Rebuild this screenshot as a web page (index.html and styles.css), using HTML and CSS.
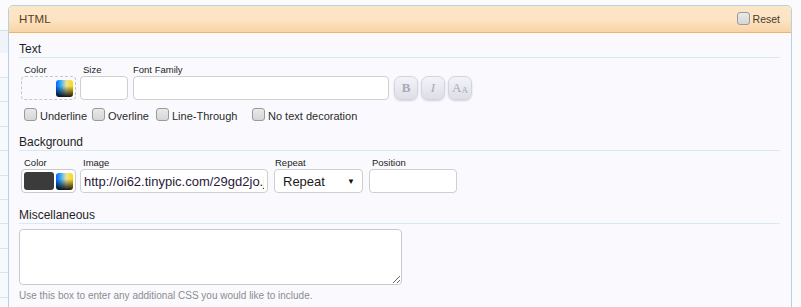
FILE: index.html
```html
<!DOCTYPE html>
<html>
<head>
<meta charset="utf-8">
<link rel="stylesheet" href="styles.css">
</head>
<body>
<div class="page">
  <div class="strip"></div>
  <div class="panel">
    <div class="panel-head">
      <span class="panel-title">HTML</span>
      <label class="reset"><input type="checkbox" class="cb"><span>Reset</span></label>
    </div>
    <div class="panel-body">
      <div class="section">
        <div class="sec-title">Text</div>
        <div class="fields">
          <div class="field">
            <span class="lbl">Color</span>
            <div class="colorbox dashed"><span class="picker"></span></div>
          </div>
          <div class="field">
            <span class="lbl">Size</span>
            <input class="inp w-size" type="text">
          </div>
          <div class="field">
            <span class="lbl lbl-tight">Font Family</span>
            <input class="inp w-font" type="text">
          </div>
          <div class="field btns">
            <span class="lbl">&nbsp;</span>
            <div class="btn-row">
              <span class="fbtn b">B</span>
              <span class="fbtn i">I</span>
              <span class="fbtn aa">A<small>A</small></span>
            </div>
          </div>
        </div>
        <div class="checks">
          <label class="chk c1"><input type="checkbox" class="cb"><span>Underline</span></label>
          <label class="chk c2"><input type="checkbox" class="cb"><span>Overline</span></label>
          <label class="chk c3"><input type="checkbox" class="cb"><span>Line-Through</span></label>
          <label class="chk"><input type="checkbox" class="cb"><span>No text decoration</span></label>
        </div>
      </div>

      <div class="section">
        <div class="sec-title bg-title">Background</div>
        <div class="fields">
          <div class="field">
            <span class="lbl">Color</span>
            <div class="colorbox solid"><span class="swatch"></span><span class="picker"></span></div>
          </div>
          <div class="field">
            <span class="lbl">Image</span>
            <input class="inp w-img" type="text" value="http://oi62.tinypic.com/29gd2jo.jpg">
          </div>
          <div class="field gap6">
            <span class="lbl lbl-tight">Repeat</span>
            <div class="select"><span>Repeat</span><span class="arrow">&#9660;</span></div>
          </div>
          <div class="field gap6">
            <span class="lbl">Position</span>
            <input class="inp w-pos" type="text">
          </div>
        </div>
      </div>

      <div class="section">
        <div class="sec-title misc-title">Miscellaneous</div>
        <textarea class="misc"></textarea>
        <div class="hint">Use this box to enter any additional CSS you would like to include.</div>
      </div>
    </div>
  </div>
</div>
</body>
</html>
```
FILE: styles.css
```css
html, body {
  margin: 0;
  padding: 0;
  background: #fbfbfd;
  font-family: "Liberation Sans", Arial, sans-serif;
  color: #222;
}
.page {
  display: flex;
  align-items: flex-start;
  height: 307px;
  overflow: hidden;
}
.strip {
  width: 8px;
  flex: none;
  height: 307px;
  background:
    linear-gradient(#cfe2f1, #cfe2f1) 0 30px / 8px 1px no-repeat,
    linear-gradient(#eef4fa, #eef4fa) 0 31px / 8px 22px no-repeat,
    repeating-linear-gradient(to bottom, #d4e6f3 0, #d4e6f3 1px, #f7fafd 1px, #f7fafd 24.4px) 0 77px / 8px 240px no-repeat;
}
.panel {
  margin-top: 5px;
  width: 782px;
  height: 320px;
  border: 1px solid #b7d0e3;
  border-radius: 5px 5px 0 0;
  background: #fafafe;
  overflow: hidden;
}
.panel-head {
  height: 26px;
  border-bottom: 1px solid #f6b35f;
  background: linear-gradient(to bottom, #fde6c8 0%, #fce3c2 55%, #f8d4a6 100%);
  display: flex;
  align-items: center;
  justify-content: space-between;
  padding: 0 10px 0 10px;
}
.panel-title {
  font-size: 11.5px;
  color: #5b3d16;
  letter-spacing: 0.1px;
}
.reset {
  display: flex;
  align-items: center;
  gap: 3px;
  font-size: 10.5px;
  color: #4a3a28;
  margin-top: -1px;
  margin-right: 1px;
}
.cb {
  -webkit-appearance: none;
  appearance: none;
  width: 13px;
  height: 13px;
  margin: 0;
  border: 1px solid #9a9a9a;
  border-radius: 3px;
  background: linear-gradient(to bottom, #e9e9e9, #d6d6d6);
  box-sizing: border-box;
  flex: none;
}
.panel-body {
  padding: 0 11px 0 10px;
}
.sec-title {
  font-size: 12px;
  line-height: 16px;
  padding-top: 8px;
  border-bottom: 1px solid #d6e9f5;
  color: #1e1e1e;
}
.bg-title {
  padding-top: 13px;
}
.misc-title {
  padding-top: 14px;
}
.fields {
  display: flex;
  align-items: flex-start;
  gap: 4px;
  margin-top: 5px;
  padding-left: 2px;
}
.field {
  display: flex;
  flex-direction: column;
}
.field.gap6 {
  margin-left: 2px;
}
.field.btns {
  margin-left: 1px;
}
.lbl {
  font-size: 9.5px;
  line-height: 13px;
  padding-left: 3px;
  color: #222;
}
.lbl-tight {
  padding-left: 1px;
}
.colorbox {
  width: 55px;
  height: 24px;
  box-sizing: border-box;
  border-radius: 4px;
  display: flex;
  align-items: center;
  justify-content: flex-end;
  padding-right: 2px;
  gap: 2px;
}
.colorbox.dashed {
  border: 1px dashed #c6c6c6;
}
.colorbox.solid {
  border: 1px solid #c9c9c9;
  background: #fff;
  padding-left: 2px;
}
.swatch {
  flex: 1;
  height: 18px;
  background: #3b3b3b;
  border-radius: 3px;
}
.picker {
  width: 17px;
  height: 17px;
  border-radius: 3px;
  background:
    linear-gradient(to bottom, rgba(0,0,0,0) 35%, rgba(0,0,0,0.9) 100%),
    linear-gradient(to right, #0a5cff 0%, #2aa8ff 25%, #e9e2a0 60%, #ffd800 100%);
  flex: none;
}
.inp {
  height: 24px;
  box-sizing: border-box;
  border: 1px solid #cfcfcf;
  border-radius: 4px;
  background: #fff;
  margin: 0;
  padding: 0 3px;
  font-family: "Liberation Sans", Arial, sans-serif;
  font-size: 13px;
  color: #2a1a3a;
  outline: none;
}
.w-size { width: 48px; }
.w-font { width: 256px; margin-left: 1px; }
.w-img { width: 188px; }
.w-pos { width: 88px; }
.btn-row {
  display: flex;
  gap: 3px;
}
.fbtn {
  width: 24px;
  height: 24px;
  box-sizing: border-box;
  border: 1px solid #d4d4e0;
  border-radius: 7px;
  background: linear-gradient(to bottom, #f3f3f9, #dedee8);
  box-shadow: 0 1px 2px rgba(80,80,110,0.25);
  display: flex;
  align-items: center;
  justify-content: center;
  font-family: "Liberation Serif", "Times New Roman", serif;
  font-size: 13px;
  color: #a9a9b6;
}
.fbtn.b { font-weight: bold; }
.fbtn.i { font-style: italic; }
.fbtn.aa small { font-size: 9px; margin-top: 3px; }
.checks {
  display: flex;
  align-items: center;
  margin-top: 8px;
  padding-left: 5px;
  height: 13px;
}
.chk {
  display: flex;
  align-items: center;
  gap: 3px;
  font-size: 11px;
  color: #2a2a2a;
}
.chk span { margin-top: 2px; }
.c1 { width: 68px; }
.c2 { width: 64px; }
.c3 { width: 96px; }
.select {
  width: 89px;
  height: 24px;
  box-sizing: border-box;
  border: 1px solid #cfcfcf;
  border-radius: 4px;
  background: #fff;
  display: flex;
  align-items: center;
  justify-content: space-between;
  padding: 0 7px 0 8px;
  font-size: 13px;
  color: #1a1a1a;
}
.arrow {
  font-size: 8px;
  color: #111;
}
.misc {
  display: block;
  width: 383px;
  height: 56px;
  box-sizing: border-box;
  margin: 5px 0 0 0;
  border: 1px solid #c9c9c9;
  border-radius: 4px;
  background: #fff;
  resize: both;
  outline: none;
}
.hint {
  font-size: 10px;
  line-height: 12px;
  color: #8c8c8c;
  margin-top: 5px;
}
```
